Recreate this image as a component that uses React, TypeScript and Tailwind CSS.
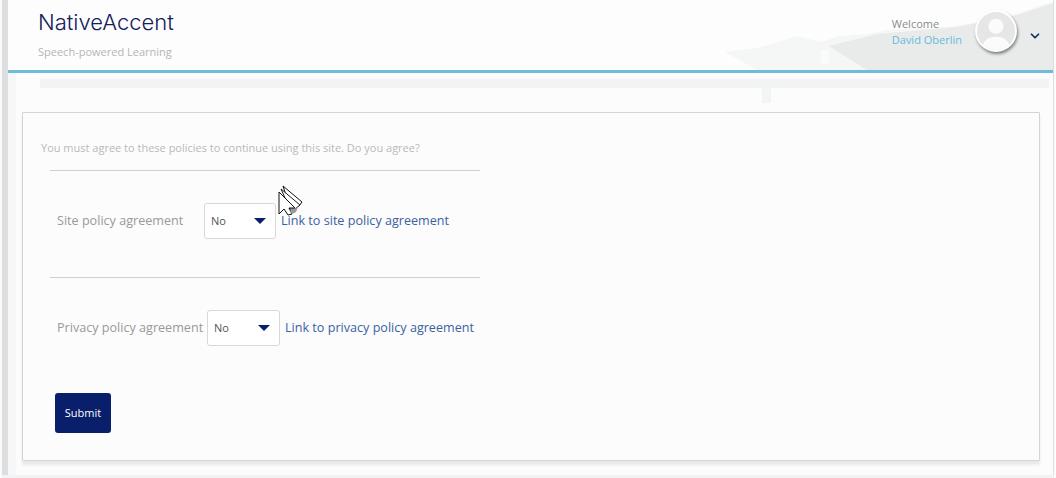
import React from 'react';
import { ChevronDown } from 'lucide-react';

const bodyFont = "font-['Open_Sans','Noto_Sans',sans-serif]";

// leftover gif smear behind the user area
const HeaderSmear = () => (
  <svg className="absolute right-0 top-0 h-[70px] w-[336px]" viewBox="0 0 336 70">
    <path d="M8 52 L40 48 L62 42 L80 36 L104 42 L122 36 L150 34 L170 30 L240 26 L270 20 L300 14 L328 4 L336 2 L336 70 L40 70 Z" fill="#f5f6f6" />
    <path d="M112 46 L160 34 L240 27 L300 15 L336 3 L336 70 L150 70 Z" fill="#e9eaea" />
    <rect x="104" y="50" width="8" height="14" fill="#fbfbfc" />
  </svg>
);

const Avatar = () => (
  <div className="h-[42px] w-[42px] overflow-hidden rounded-full border-2 border-white bg-[#e6e6e6] shadow-[1px_2px_3px_rgba(0,0,0,0.45)]">
    <svg viewBox="0 0 40 40" className="h-full w-full">
      <circle cx="20" cy="15" r="8" fill="#fbfbfb" />
      <path d="M5 40 C6 28 14 26 20 26 C26 26 34 28 35 40 Z" fill="#fbfbfb" />
    </svg>
  </div>
);

const Cursor = () => (
  <svg className="absolute left-[276px] top-[185px]" width="26" height="33" viewBox="0 0 26 33">
    <path d="M5 1 L24 17 L21 21 L12 22 Z" fill="#fff" stroke="#111" strokeWidth="1" />
    <path d="M3 4 L22 20 L17 24 L12 24 Z" fill="#fff" stroke="#222" strokeWidth="1" />
    <path d="M1 7 L1 29 L6 24 L10 30 L14 29 L11 23 L17 23 Z" fill="#fff" stroke="#111" strokeWidth="1" />
    <path d="M12 26 L20 22 L18 27 L14 29 Z" fill="#999" />
  </svg>
);

const PolicySelect = ({ width }: { width: string }) => (
  <div className={`${width} flex h-[36px] shrink-0 items-center justify-between rounded-[3px] border border-[#d8d8d8] bg-white pl-[6px] pr-[9px] text-[11px] text-[#555]`}>
    <span>No</span>
    <span className="h-0 w-0 border-x-[6px] border-t-[6px] border-x-transparent border-t-[#0a1f6b]" />
  </div>
);

const PolicyRow = ({ label, link, labelWidth, selectWidth }: { label: string; link: string; labelWidth: string; selectWidth: string }) => (
  <div className="flex items-center pl-[7px]">
    <span className={`${labelWidth} shrink-0 whitespace-nowrap text-[12.6px] text-[#999]`}>{label}</span>
    <PolicySelect width={selectWidth} />
    <a className="ml-[5px] whitespace-nowrap text-[12.6px] text-[#3a629f]">{link}</a>
  </div>
);

export default function App() {
  return (
    <div className={`relative h-[478px] w-[1056px] overflow-hidden border-x-2 border-[#fbfbfb] bg-[#fcfcfd] ${bodyFont}`}>
      <div className="h-full border-l-[6px] border-r-[1px] border-[#dedede]">
        <header className="relative flex h-[73px] items-start justify-between border-b-[3px] border-[#6fbbdc] bg-[#fdfdfd]">
          <HeaderSmear />
          <div className="relative pl-[30px]">
            <div className="mt-[8px] font-['Inter',sans-serif] text-[22px] font-light leading-[28px] text-[#14205c]">NativeAccent</div>
            <div className="mt-[8px] text-[11px] leading-[16px] text-[#b5b5b5]">Speech-powered Learning</div>
          </div>
          <div className="relative mr-[11px] mt-[10px] flex items-start">
            <div className="mt-[6px] text-[11px] leading-[16px]">
              <div className="text-[#8b8b8b]">Welcome</div>
              <div className="text-[#66bcdc]">David Oberlin</div>
            </div>
            <div className="ml-[13px]"><Avatar /></div>
            <ChevronDown className="ml-[11px] mt-[19px] h-[14px] w-[14px] text-[#14305c]" strokeWidth={3} />
          </div>
        </header>

        <div className="ml-[32px] mr-[4px] mt-[6px] h-[9px] bg-[#f1f3f4]" />
        <div className="absolute left-[760px] top-[88px] h-[15px] w-[9px] bg-[#f3f5f5]" />
        <div className="absolute bottom-0 left-[6px] top-[73px] w-[8px] bg-[#f5f7f9]" />

        <main className="relative mx-[14px] mt-[24px] h-[349px] w-[1018px] rounded-[1px] border border-[#d4d4d4] bg-[#fcfcfd] pl-[18px] pt-[27px] shadow-[0_4px_3px_rgba(0,0,0,0.08)]">
          <p className="text-[11px] leading-[16px] text-[#b9b9b9]">You must agree to these policies to continue using this site. Do you agree?</p>
          <div className="ml-[9px] w-[430px]">
            <div className="mt-[14px] border-t border-[#cfcfcf]" />
            <div className="mt-[32px]">
              <PolicyRow label="Site policy agreement" link="Link to site policy agreement" labelWidth="w-[147px]" selectWidth="w-[72px]" />
            </div>
            <div className="mt-[38px] border-t border-[#cfcfcf]" />
            <div className="mt-[32px]">
              <PolicyRow label="Privacy policy agreement" link="Link to privacy policy agreement" labelWidth="w-[150px]" selectWidth="w-[73px]" />
            </div>
          </div>
          <button className="ml-[14px] mt-[47px] h-[40px] w-[56px] rounded-[3px] bg-[#0a1f6b] text-[11px] font-medium text-white">Submit</button>
        </main>
        <div className="absolute inset-x-0 bottom-0 h-[3px] bg-[#f1f3f5]" />
      </div>
      <Cursor />
    </div>
  );
}
